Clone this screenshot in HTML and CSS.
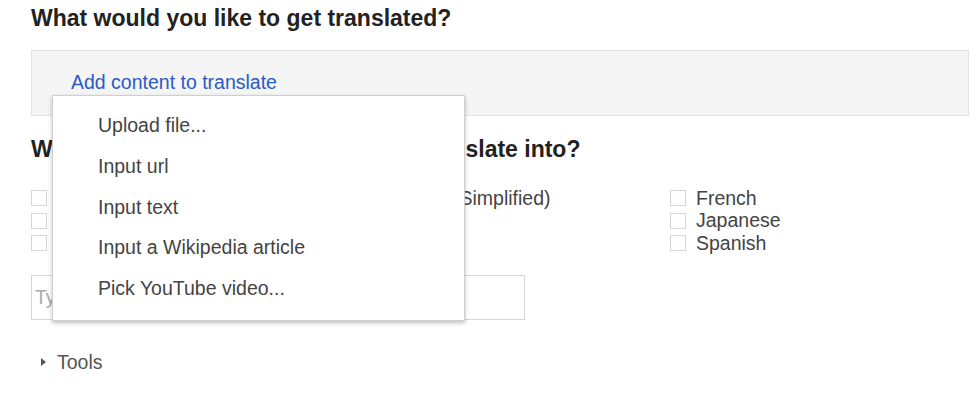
FILE: index.html
```html
<!DOCTYPE html>
<html lang="en">
<head>
  <meta charset="UTF-8" />
  <title>Translator Toolkit</title>
  <link rel="stylesheet" href="styles.css">
</head>
<body>

  <section class="step">
    <h2>What would you like to get translated?</h2>
    <div class="content-box">
      <a href="#" class="add-link">Add content to translate</a>
      <ul class="menu">
        <li>Upload file...</li>
        <li>Input url</li>
        <li>Input text</li>
        <li>Input a Wikipedia article</li>
        <li>Pick YouTube video...</li>
      </ul>
    </div>
  </section>

  <section class="step">
    <h2 class="lang-title">What language(s) would you like to translate into?</h2>
    <div class="langs">
      <div class="lang-col">
        <label><span class="box"></span>Arabic</label>
        <label><span class="box"></span>German</label>
        <label><span class="box"></span>Hindi</label>
      </div>
      <div class="lang-col">
        <label><span class="box"></span>Chinese (Simplified)</label>
        <label><span class="box"></span>Italian</label>
        <label><span class="box"></span>Russian</label>
      </div>
      <div class="lang-col">
        <label><span class="box"></span>French</label>
        <label><span class="box"></span>Japanese</label>
        <label><span class="box"></span>Spanish</label>
      </div>
    </div>
    <input type="text" class="lang-input" placeholder="Type a language">
  </section>

  <div class="tools"><span class="arrow"></span>Tools</div>

</body>
</html>
```

FILE: styles.css
```css
* {
  box-sizing: border-box;
}

body {
  margin: 0;
  padding: 5px 9px 0 31px;
  font-family: "Liberation Sans", Arial, sans-serif;
  background: #ffffff;
  color: #444;
}

h2 {
  margin: 0;
  font-size: 23px;
  font-weight: bold;
  color: #222;
  line-height: 26px;
}

.content-box {
  position: relative;
  margin-top: 19px;
  height: 66px;
  background: #f5f5f5;
  border: 1px solid #e3e3e3;
  padding: 20px 0 0 39px;
}

.add-link {
  color: #2a5bc6;
  text-decoration: none;
  font-size: 19.5px;
}

.menu {
  position: absolute;
  top: 44px;
  left: 20px;
  width: 413px;
  height: 226px;
  margin: 0;
  padding: 12px 0 0 45px;
  list-style: none;
  background: #fff;
  border: 1px solid #cfcfcf;
  box-shadow: 0 2px 4px rgba(0, 0, 0, 0.25);
  z-index: 10;
}

.menu li {
  font-size: 19.5px;
  color: #444;
  height: 40.8px;
  line-height: 34px;
}

.lang-title {
  margin-top: 20px;
}

.langs {
  display: grid;
  grid-template-columns: 319px 320px auto;
  margin-top: 25px;
}

.lang-col {
  display: flex;
  flex-direction: column;
}

.lang-col label {
  display: flex;
  align-items: center;
  font-size: 19.5px;
  color: #444;
  height: 22.5px;
}

.box {
  display: inline-block;
  flex-shrink: 0;
  width: 16px;
  height: 16px;
  border: 1px solid #d6d6d6;
  margin-right: 10px;
}

.lang-input {
  display: block;
  margin-top: 20px;
  width: 494px;
  height: 45px;
  border: 1px solid #d6d6d6;
  padding: 0 3px;
  font-family: "Liberation Sans", Arial, sans-serif;
  font-size: 19.5px;
}

.lang-input::placeholder {
  color: #aaa;
}

.tools {
  margin-top: 31px;
  margin-left: 10px;
  font-size: 19.5px;
  color: #555;
  display: flex;
  align-items: center;
}

.arrow {
  width: 0;
  height: 0;
  border-top: 4px solid transparent;
  border-bottom: 4px solid transparent;
  border-left: 5px solid #555;
  margin-right: 11px;
}
```
